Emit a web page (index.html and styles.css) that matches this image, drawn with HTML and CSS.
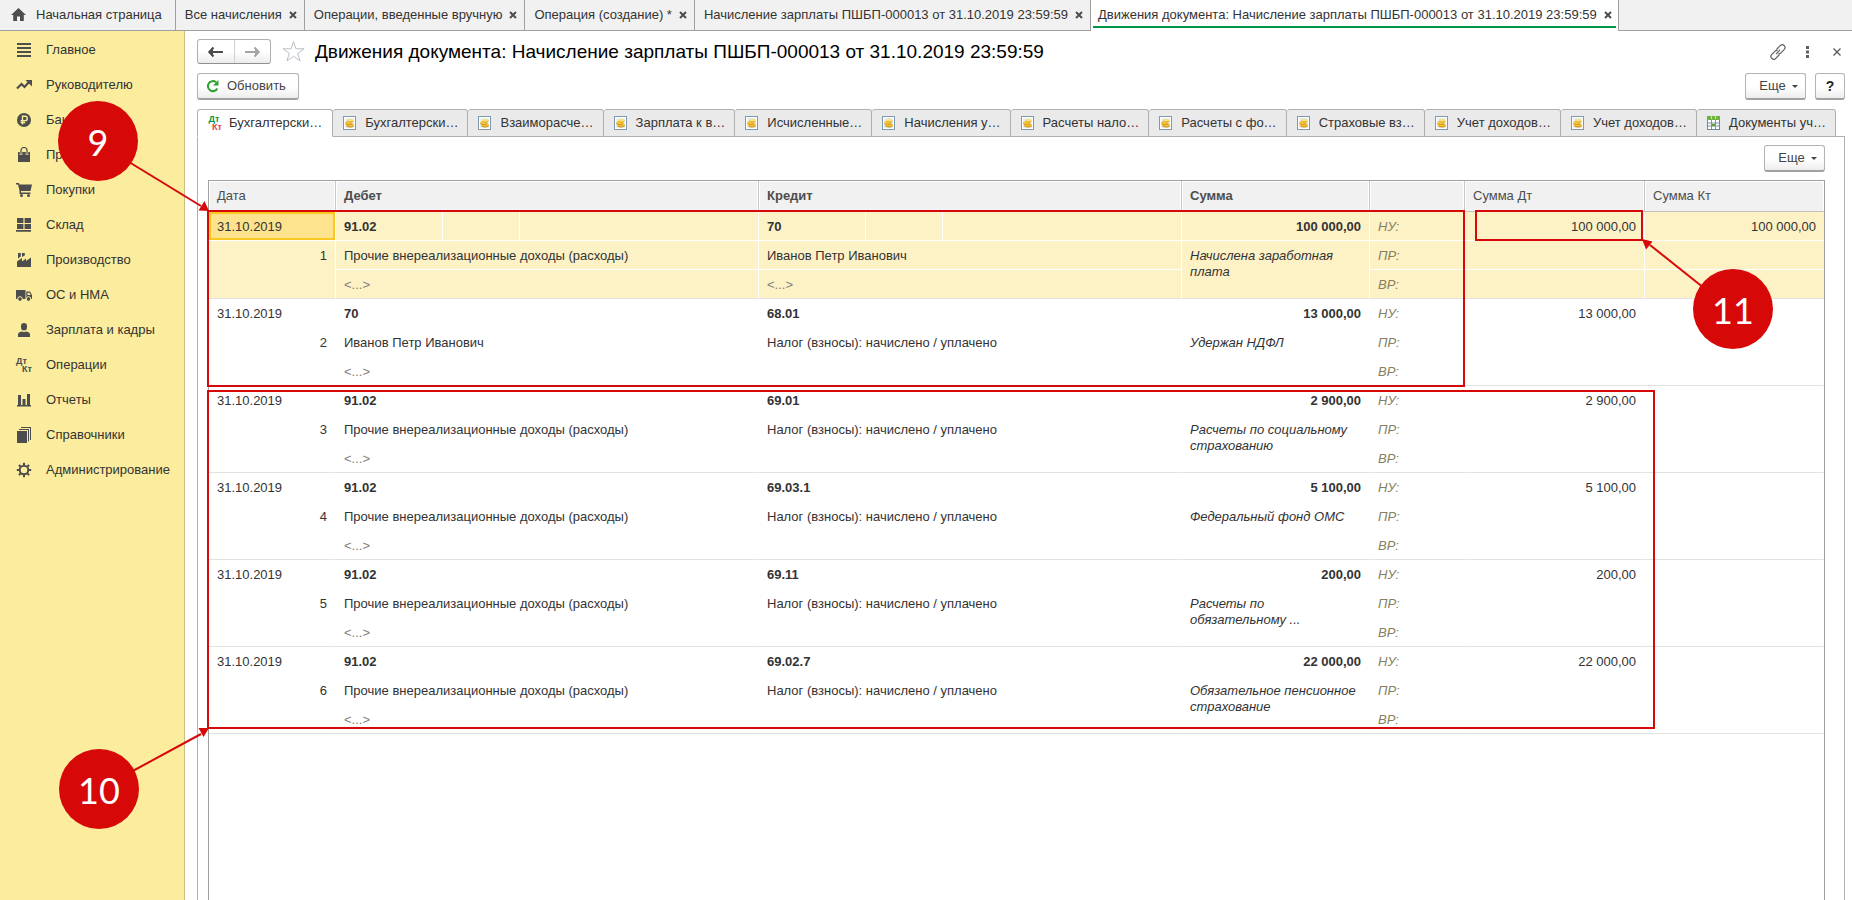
FILE: index.html
```html
<!DOCTYPE html>
<html lang="ru">
<head>
<meta charset="utf-8">
<title>Движения документа: Начисление зарплаты ПШБП-000013 от 31.10.2019 23:59:59</title>
<link rel="stylesheet" href="styles.css">
</head>
<body>
<svg class="defs" aria-hidden="true">
  <symbol id="coins" viewBox="0 0 13 15">
    <rect x=".5" y=".5" width="12" height="13" fill="#e3f0fa" stroke="#8199ad"/>
    <rect x="1.5" y="1.5" width="10" height="11" fill="none" stroke="#fff"/>
    <ellipse cx="7" cy="9.800" rx="3.800" ry="1.700" fill="#c98a0c"/>
    <ellipse cx="7" cy="9" rx="3.800" ry="1.500" fill="#f3bf35"/>
    <ellipse cx="5.800" cy="7.300" rx="3.600" ry="1.500" fill="#d19510"/>
    <ellipse cx="5.800" cy="6.600" rx="3.600" ry="1.300" fill="#f8cc48"/>
    <ellipse cx="7.200" cy="5" rx="3.200" ry="1.500" fill="#dba21c"/>
    <ellipse cx="7.200" cy="4.300" rx="3.200" ry="1.300" fill="#fde277"/>
  </symbol>
  <symbol id="sheet" viewBox="0 0 13 15">
    <rect x=".5" y=".5" width="12" height="13" fill="#fff" stroke="#6f8798"/>
    <path d="M1 7h11M1 10h11M4.500 4v9M8.500 4v9" stroke="#7b93a3"/>
    <path d="M0 0h13v4H0z" fill="#6cb33f"/>
    <path d="M5 8h3v2H5z" fill="#5aa02f"/>
    <path d="M4.500 0v3M8.500 0v3" stroke="#c9e6b4"/>
  </symbol>
</svg>

<header class="topbar">
  <a class="wtab wtab-home" href="#">
    <svg width="15" height="13" viewBox="0 0 15 13"><path d="M7.500 0 15 7h-2.200v6H9V8.500H6V13H2.200V7H0z" fill="#4d4d4d"/></svg>
    <span>Начальная страница</span>
  </a>
  <div class="wtab"><a href="#">Все начисления</a><button class="wclose" aria-label="Закрыть"><svg width="8" height="8" viewBox="0 0 8 8"><path d="M1 1l6 6m0-6l-6 6"/></svg></button></div>
  <div class="wtab"><a href="#">Операции, введенные вручную</a><button class="wclose" aria-label="Закрыть"><svg width="8" height="8" viewBox="0 0 8 8"><path d="M1 1l6 6m0-6l-6 6"/></svg></button></div>
  <div class="wtab"><a href="#">Операция (создание) *</a><button class="wclose" aria-label="Закрыть"><svg width="8" height="8" viewBox="0 0 8 8"><path d="M1 1l6 6m0-6l-6 6"/></svg></button></div>
  <div class="wtab"><a href="#">Начисление зарплаты ПШБП-000013 от 31.10.2019 23:59:59</a><button class="wclose" aria-label="Закрыть"><svg width="8" height="8" viewBox="0 0 8 8"><path d="M1 1l6 6m0-6l-6 6"/></svg></button></div>
  <div class="wtab wtab-active"><a href="#">Движения документа: Начисление зарплаты ПШБП-000013 от 31.10.2019 23:59:59</a><button class="wclose" aria-label="Закрыть"><svg width="8" height="8" viewBox="0 0 8 8"><path d="M1 1l6 6m0-6l-6 6"/></svg></button></div>
</header>

<div class="body">
  <nav class="sidebar">
    <a href="#"><svg viewBox="0 0 16 16"><path d="M1 1h14v2H1zM1 5h14v2H1zM1 9h14v2H1zM1 13h14v2H1z"/></svg>Главное</a>
    <a href="#"><svg viewBox="0 0 16 16"><path d="M1 11.500 5.500 7l3 3L13 5" fill="none" stroke="#4d4d4d" stroke-width="2.200"/><path d="M9.500 3H16v6.500z"/></svg>Руководителю</a>
    <a href="#"><svg viewBox="0 0 16 16"><circle cx="8" cy="8" r="7"/><path d="M6.500 12.500V4.300h2.600a2.100 2.100 0 0 1 0 4.300H4.600M4.600 10.500h4.600" fill="none" stroke="#fbec9e" stroke-width="1.400"/></svg>Банк и касса</a>
    <a href="#"><svg viewBox="0 0 16 16"><path d="M2 5h12v10H2z"/><path d="M5 8V4a3 3 0 0 1 6 0v4" fill="none" stroke="#fbec9e" stroke-width="2.600"/><path d="M5 7.500V3.500a3 3 0 0 1 6 0v4" fill="none" stroke="#4d4d4d" stroke-width="1.200"/></svg>Продажи</a>
    <a href="#"><svg viewBox="0 0 16 16"><path d="M0 1h3l.5 1.500H16L14.500 9H5v1.500h9.500V12H3.500V8.500L2 2.500H0z"/><circle cx="5.500" cy="13.500" r="1.500"/><circle cx="12.500" cy="13.500" r="1.500"/></svg>Покупки</a>
    <a href="#"><svg viewBox="0 0 16 16"><path d="M1 1h6.400v5H1zM8.600 1H15v5H8.600zM1 7h6.400v5H1zM8.600 7H15v5H8.600zM0 13h15v1.800H0z"/></svg>Склад</a>
    <a href="#"><svg viewBox="0 0 16 16"><path d="M1 15V9.500L6 6v3.500l4-3V9l5-3.500V15zM2 1h2.800v3.500L2 6.500zM6 1h2.800v2.500L6 5z"/></svg>Производство</a>
    <a href="#"><svg viewBox="0 0 16 16"><path d="M0 3h9.500v9H0zM10.300 4.500h3.700l2 3.500v4h-5.700z"/><path d="M11.500 5.700h2l1.200 2.300h-3.200z" fill="#fbec9e"/><circle cx="4" cy="12" r="2.300" stroke="#fbec9e"/><circle cx="12.500" cy="12" r="2.300" stroke="#fbec9e"/></svg>ОС и НМА</a>
    <a href="#"><svg viewBox="0 0 16 16"><path d="M8 1a3 3 0 0 1 3 3v1.500a3 3 0 0 1-6 0V4a3 3 0 0 1 3-3zM2 15v-2.500Q2 10 6 9.500q2 1.200 4 0 4 .5 4 3V15z"/></svg>Зарплата и кадры</a>
    <a href="#"><span class="dtkt"><b>Дт</b><b>Кт</b></span>Операции</a>
    <a href="#"><svg viewBox="0 0 16 16"><path d="M2 3h3v10H2zM6.500 7h3v6h-3zM11 2h3v11h-3zM1 13h14v1.500H1z"/></svg>Отчеты</a>
    <a href="#"><svg viewBox="0 0 16 16"><path d="M1 4h10v12H1zM3 2h10v12.500h-1V3H3zM5 0h10v13h-1V1H5z"/></svg>Справочники</a>
    <a href="#"><svg viewBox="0 0 16 16"><circle cx="8" cy="8" r="4.300" fill="none" stroke="#4d4d4d" stroke-width="2"/><path d="M8 .8v3M8 12.200v3M.8 8h3M12.200 8h3M2.900 2.900 5 5M11 11l2.100 2.100M2.900 13.100 5 11M11 5l2.100-2.100" stroke="#4d4d4d" stroke-width="2"/></svg>Администрирование</a>
  </nav>

  <main class="main">
    <div class="titlebar">
      <div class="history">
        <button aria-label="Назад"><svg width="15" height="12" viewBox="0 0 15 12"><path d="M5.500 1.500 1.500 6l4 4.500M2 6h13" stroke="#4d4d4d"/><path d="M0 6l5-5v10z" fill="#4d4d4d"/></svg></button>
        <button aria-label="Вперед"><svg width="15" height="12" viewBox="0 0 15 12"><path d="M9.500 1.500l4 4.500-4 4.500M13 6H0" stroke="#a6a6a6"/><path d="M15 6l-5-5v10z" fill="#a6a6a6"/></svg></button>
      </div>
      <svg class="star" width="23" height="23" viewBox="0 0 23 23"><path d="M11.500 1.500l2.500 7.300h8l-6.300 4.600 2.400 7.600-6.600-4.700L4.900 21l2.400-7.600L1 8.800h8z" fill="#fff" stroke="#b9bfc6"/></svg>
      <h1>Движения документа: Начисление зарплаты ПШБП-000013 от 31.10.2019 23:59:59</h1>
      <div class="wintools">
        <button aria-label="Получить ссылку"><svg width="16" height="16" viewBox="0 0 16 16" fill="none" stroke="#606060" stroke-width="1.200"><path d="M6.500 5.500 10.200 1.700a2.600 2.600 0 0 1 4.100 3.600L11 8.800a2.400 2.400 0 0 1-2.500.7M9.500 10.500l-3.700 3.800a2.600 2.600 0 0 1-4.100-3.600L5 7.200a2.400 2.400 0 0 1 2.500-.7M6 10.200 10 5.800"/></svg></button>
        <button aria-label="Еще действия"><svg width="3" height="12" viewBox="0 0 3 12" fill="#606060"><path d="M0 0h3v3H0zM0 4.500h3v3H0zM0 9h3v3H0z"/></svg></button>
        <button aria-label="Закрыть"><svg width="8" height="8" viewBox="0 0 8 8" stroke="#555" stroke-width="1.200"><path d="M.5.500l7 7m0-7l-7 7"/></svg></button>
      </div>
    </div>

    <div class="toolbar">
      <button class="btn btn-refresh"><svg width="14" height="14" viewBox="0 0 14 14"><path d="M11.300 9.500A5 5 0 1 1 10 3.200" fill="none" stroke="#2ca02c" stroke-width="2"/><path d="M12.500 1v5.500H7z" fill="#2ca02c"/></svg>Обновить</button>
      <span class="spacer"></span>
      <button class="btn btn-more">Еще<i class="caret"></i></button>
      <button class="btn btn-help">?</button>
    </div>

    <div class="tabs" role="tablist">
      <button class="tab tab-active" role="tab" aria-selected="true"><span class="dtkt dtkt-color"><b>Дт</b><b>Кт</b></span>Бухгалтерски…</button>
      <button class="tab" role="tab"><svg><use href="#coins"/></svg>Бухгалтерски…</button>
      <button class="tab" role="tab"><svg><use href="#coins"/></svg>Взаиморасче…</button>
      <button class="tab" role="tab"><svg><use href="#coins"/></svg>Зарплата к в…</button>
      <button class="tab" role="tab"><svg><use href="#coins"/></svg>Исчисленные…</button>
      <button class="tab" role="tab"><svg><use href="#coins"/></svg>Начисления у…</button>
      <button class="tab" role="tab"><svg><use href="#coins"/></svg>Расчеты нало…</button>
      <button class="tab" role="tab"><svg><use href="#coins"/></svg>Расчеты с фо…</button>
      <button class="tab" role="tab"><svg><use href="#coins"/></svg>Страховые вз…</button>
      <button class="tab" role="tab"><svg><use href="#coins"/></svg>Учет доходов…</button>
      <button class="tab" role="tab"><svg><use href="#coins"/></svg>Учет доходов…</button>
      <button class="tab" role="tab"><svg><use href="#sheet"/></svg>Документы уч…</button>
    </div>

    <section class="panel">
      <div class="panel-tools"><button class="btn btn-more">Еще<i class="caret"></i></button></div>
      <div class="grid">
        <table>
          <colgroup>
            <col class="c-date"><col class="c-acc"><col class="c-cur"><col class="c-rest"><col class="c-acc"><col class="c-cur"><col class="c-rest"><col class="c-sum"><col class="c-kind"><col class="c-dt"><col class="c-kt">
          </colgroup>
          <thead>
            <tr><th>Дата</th><th class="strong" colspan="3">Дебет</th><th class="strong" colspan="3">Кредит</th><th class="strong">Сумма</th><th></th><th>Сумма Дт</th><th>Сумма Кт</th></tr>
          </thead>
          <tbody class="current">
            <tr><td class="focus">31.10.2019</td><td class="strong">91.02</td><td></td><td></td><td class="strong">70</td><td></td><td></td><td class="strong num">100 000,00</td><td class="kind">НУ:</td><td class="num">100 000,00</td><td class="num edge">100 000,00</td></tr>
            <tr><td class="num top last" rowspan="2">1</td><td colspan="3">Прочие внереализационные доходы (расходы)</td><td colspan="3">Иванов Петр Иванович</td><td class="note last" rowspan="2">Начислена заработная плата</td><td class="kind">ПР:</td><td></td><td class="edge"></td></tr>
            <tr class="last"><td class="empty" colspan="3">&lt;...&gt;</td><td class="empty" colspan="3">&lt;...&gt;</td><td class="kind">ВР:</td><td></td><td class="edge"></td></tr>
          </tbody>
          <tbody>
            <tr><td>31.10.2019</td><td class="strong">70</td><td></td><td></td><td class="strong">68.01</td><td></td><td></td><td class="strong num">13 000,00</td><td class="kind">НУ:</td><td class="num">13 000,00</td><td></td></tr>
            <tr><td class="num top last" rowspan="2">2</td><td colspan="3">Иванов Петр Иванович</td><td colspan="3">Налог (взносы): начислено / уплачено</td><td class="note last" rowspan="2">Удержан НДФЛ</td><td class="kind">ПР:</td><td></td><td></td></tr>
            <tr class="last"><td class="empty" colspan="3">&lt;...&gt;</td><td colspan="3"></td><td class="kind">ВР:</td><td></td><td></td></tr>
          </tbody>
          <tbody>
            <tr><td>31.10.2019</td><td class="strong">91.02</td><td></td><td></td><td class="strong">69.01</td><td></td><td></td><td class="strong num">2 900,00</td><td class="kind">НУ:</td><td class="num">2 900,00</td><td></td></tr>
            <tr><td class="num top last" rowspan="2">3</td><td colspan="3">Прочие внереализационные доходы (расходы)</td><td colspan="3">Налог (взносы): начислено / уплачено</td><td class="note last" rowspan="2">Расчеты по социальному страхованию</td><td class="kind">ПР:</td><td></td><td></td></tr>
            <tr class="last"><td class="empty" colspan="3">&lt;...&gt;</td><td colspan="3"></td><td class="kind">ВР:</td><td></td><td></td></tr>
          </tbody>
          <tbody>
            <tr><td>31.10.2019</td><td class="strong">91.02</td><td></td><td></td><td class="strong">69.03.1</td><td></td><td></td><td class="strong num">5 100,00</td><td class="kind">НУ:</td><td class="num">5 100,00</td><td></td></tr>
            <tr><td class="num top last" rowspan="2">4</td><td colspan="3">Прочие внереализационные доходы (расходы)</td><td colspan="3">Налог (взносы): начислено / уплачено</td><td class="note last" rowspan="2">Федеральный фонд ОМС</td><td class="kind">ПР:</td><td></td><td></td></tr>
            <tr class="last"><td class="empty" colspan="3">&lt;...&gt;</td><td colspan="3"></td><td class="kind">ВР:</td><td></td><td></td></tr>
          </tbody>
          <tbody>
            <tr><td>31.10.2019</td><td class="strong">91.02</td><td></td><td></td><td class="strong">69.11</td><td></td><td></td><td class="strong num">200,00</td><td class="kind">НУ:</td><td class="num">200,00</td><td></td></tr>
            <tr><td class="num top last" rowspan="2">5</td><td colspan="3">Прочие внереализационные доходы (расходы)</td><td colspan="3">Налог (взносы): начислено / уплачено</td><td class="note last" rowspan="2">Расчеты по<br>обязательному ...</td><td class="kind">ПР:</td><td></td><td></td></tr>
            <tr class="last"><td class="empty" colspan="3">&lt;...&gt;</td><td colspan="3"></td><td class="kind">ВР:</td><td></td><td></td></tr>
          </tbody>
          <tbody>
            <tr><td>31.10.2019</td><td class="strong">91.02</td><td></td><td></td><td class="strong">69.02.7</td><td></td><td></td><td class="strong num">22 000,00</td><td class="kind">НУ:</td><td class="num">22 000,00</td><td></td></tr>
            <tr><td class="num top last" rowspan="2">6</td><td colspan="3">Прочие внереализационные доходы (расходы)</td><td colspan="3">Налог (взносы): начислено / уплачено</td><td class="note last" rowspan="2">Обязательное пенсионное страхование</td><td class="kind">ПР:</td><td></td><td></td></tr>
            <tr class="last"><td class="empty" colspan="3">&lt;...&gt;</td><td colspan="3"></td><td class="kind">ВР:</td><td></td><td></td></tr>
          </tbody>
        </table>
      </div>
    </section>
  </main>
</div>

<!-- Callouts over the page -->
<div class="frame frame-9"></div>
<div class="frame frame-10"></div>
<div class="frame frame-11"></div>
<svg class="arrow arrow-9" width="90" height="60" viewBox="0 0 90 60"><path d="M9 11 81 55" stroke="#d70808" stroke-width="2"/><path d="M89 60 84.500 50 78.500 59.500z" fill="#d70808"/></svg>
<svg class="arrow arrow-10" width="90" height="60" viewBox="0 0 90 60"><path d="M9 53 81 14" stroke="#d70808" stroke-width="2"/><path d="M89 8H78.500l5 9z" fill="#d70808"/></svg>
<svg class="arrow arrow-11" width="70" height="60" viewBox="0 0 70 60"><path d="M67 53 8 6" stroke="#d70808" stroke-width="2"/><path d="M0 0l10.500 2.500-6.500 8z" fill="#d70808"/></svg>
<div class="badge badge-9">9</div>
<div class="badge badge-10">10</div>
<div class="badge badge-11">11</div>
</body>
</html>
```

FILE: styles.css
```css
* { box-sizing: border-box; }

html, body { height: 100%; }

body {
  margin: 0;
  display: flex;
  flex-direction: column;
  position: relative;
  overflow: hidden;
  background: #fff;
  color: #333;
  font: 13px/16px "Liberation Sans", Arial, sans-serif;
}

button {
  margin: 0;
  padding: 0;
  border: 0;
  background: none;
  color: inherit;
  font: inherit;
}

a { color: inherit; text-decoration: none; }
svg { display: block; flex: none; }
.defs { position: absolute; width: 0; height: 0; }

/* Window tabs */
.topbar {
  flex: none;
  display: flex;
  height: 31px;
  background: #f1f1f1;
  border-bottom: 1px solid #a0a0a0;
}
.wtab {
  display: flex;
  align-items: center;
  gap: 7px;
  padding: 0 7px 1px 9px;
  border-right: 1px solid #a0a0a0;
  white-space: nowrap;
}
.wtab-home { gap: 10px; padding: 0 13px 1px 11px; }
.wtab-active {
  height: 31px;
  padding-left: 7px;
  padding-right: 6px;
  background: linear-gradient(#009646, #009646) center 26px / calc(100% - 4px) 2px no-repeat #fff;
}
.wclose svg { fill: none; stroke: #4d4d4d; stroke-width: 2; }

.body { flex: 1; min-height: 0; display: flex; }

/* Sections panel */
.sidebar {
  flex: none;
  width: 185px;
  padding-top: 1px;
  background: #fbec9e;
  border-right: 1px solid #c9bf80;
}
.sidebar a {
  display: flex;
  align-items: center;
  gap: 14px;
  height: 35px;
  padding-left: 16px;
  white-space: nowrap;
}
.sidebar svg { width: 16px; height: 16px; fill: #4d4d4d; }

.dtkt {
  flex: none;
  display: flex;
  flex-direction: column;
  width: 16px;
  color: #4d4d4d;
  font-size: 9px;
  line-height: 8px;
}
.dtkt b:last-child { align-self: flex-end; }

/* Form */
.main {
  flex: 1;
  min-width: 0;
  display: flex;
  flex-direction: column;
  padding: 8px 7px 0 12px;
}
.titlebar { display: flex; align-items: center; height: 25px; }
.history {
  display: flex;
  width: 74px;
  height: 25px;
  border: 1px solid #b0b0b0;
  border-bottom-color: #8f8f8f;
  border-radius: 3px;
  background: linear-gradient(#fff 50%, #ececec);
}
.history button { flex: 1; display: flex; align-items: center; justify-content: center; }
.history button + button { border-left: 1px solid #d0d0d0; }
.history svg { fill: none; stroke-width: 2; }
.star { margin: 0 10px 0 11px; }
h1 {
  flex: 1;
  margin: 0;
  color: #000;
  font-size: 19px;
  line-height: 24px;
  font-weight: 400;
  white-space: nowrap;
}
.wintools { display: flex; align-items: center; gap: 20px; padding-right: 4px; }
.wintools button:last-child { margin-left: 4px; }

.toolbar { display: flex; gap: 9px; margin-top: 9px; }
.spacer { flex: 1; }
.btn {
  display: flex;
  align-items: center;
  justify-content: center;
  height: 27px;
  border: 1px solid #b3b3b3;
  border-bottom: 2px solid #a0a0a0;
  border-radius: 3px;
  background: linear-gradient(#fff 50%, #ededed);
  color: #444;
}
.btn-refresh { gap: 7px; padding: 0 12px 0 8px; }
.btn-more { width: 61px; gap: 6px; padding-left: 6px; }
.btn-help { width: 30px; color: #222; font-size: 14px; font-weight: 700; }
.caret { border: 3px solid transparent; border-top-color: #444; border-bottom: 0; }

.tabs { display: flex; margin-top: 9px; position: relative; z-index: 1; }
.tab {
  display: flex;
  align-items: center;
  gap: 9px;
  height: 28px;
  padding: 0 9px 0 10px;
  border: 1px solid #b0b0b0;
  border-left-width: 0;
  border-radius: 3px 3px 0 0;
  background: #eaeaea;
  white-space: nowrap;
}
.tab svg { width: 13px; height: 15px; }
.tab-active {
  gap: 7px;
  padding: 0 10px 0 8px;
  border-left-width: 1px;
  border-bottom-color: #fff;
  background: #fff;
}
.dtkt-color b:first-child { color: #009646; }
.dtkt-color b:last-child { color: #e04040; }

.panel {
  flex: 1;
  min-height: 0;
  display: flex;
  flex-direction: column;
  margin-top: -1px;
  padding: 8px 19px 0 10px;
  border: 1px solid #b0b0b0;
  border-bottom: 0;
}
.panel-tools { display: flex; justify-content: flex-end; padding-bottom: 8px; }

/* Postings table */
.grid {
  flex: 1;
  min-height: 0;
  overflow: hidden;
  border: 1px solid #a0a0a0;
  border-bottom: 0;
}
table { width: 100%; table-layout: fixed; border-collapse: separate; border-spacing: 0; }
.c-date { width: 127px; }
.c-acc { width: 107px; }
.c-cur { width: 77px; }
.c-sum { width: 188px; }
.c-kind { width: 95px; }
.c-dt { width: 180px; }
.c-kt { width: 179px; }

th {
  height: 31px;
  padding: 0 8px;
  border-right: 1px solid #c8c8c8;
  border-bottom: 1px solid #c0c0c0;
  box-shadow: inset 1px 1px #fff, inset -1px 0 #fff;
  background: #f1f1f1;
  color: #4d4d4d;
  font-weight: 400;
  text-align: left;
}
td {
  height: 29px;
  padding: 1px 8px 0;
  border-right: 1px solid transparent;
  border-bottom: 1px solid transparent;
  white-space: nowrap;
}
th:last-child, td.edge { border-right: 0; }
.strong { font-weight: 700; }
.num { text-align: right; }
.kind { color: #85805f; font-style: italic; }
.empty { color: #808080; }
.top { vertical-align: top; padding-top: 7px; }
.note {
  padding-top: 7px;
  vertical-align: top;
  font-style: italic;
  white-space: normal;
}
.current td { border-color: #fff; background: #fdf1c6; }
.current .focus {
  background: #fde38d;
  box-shadow: inset 0 0 0 2px #f9c821;
}
.last td, td.last, .current .last td, .current td.last { border-bottom-color: #e2e2e2; }

/* Callouts */
.frame { position: absolute; border: 2px solid #d70808; }
.frame-9 { left: 207px; right: 387px; top: 210px; height: 177px; }
.frame-10 { left: 207px; right: 197px; top: 390px; height: 339px; }
.frame-11 { right: 209px; top: 210px; width: 168px; height: 31px; }
.badge {
  position: absolute;
  width: 80px;
  height: 80px;
  border-radius: 50%;
  background: #d70808;
  color: #fff;
  font: 36px/82px Lato, "Open Sans", sans-serif;
  text-align: center;
}
.badge-9 { left: 58px; top: 101px; }
.badge-10 { left: 59px; top: 749px; }
.badge-11 { right: 79px; top: 269px; }
.arrow { position: absolute; }
.arrow-9 { left: 120px; top: 151px; }
.arrow-10 { left: 120px; top: 720px; }
.arrow-11 { right: 140px; top: 239px; }
```
